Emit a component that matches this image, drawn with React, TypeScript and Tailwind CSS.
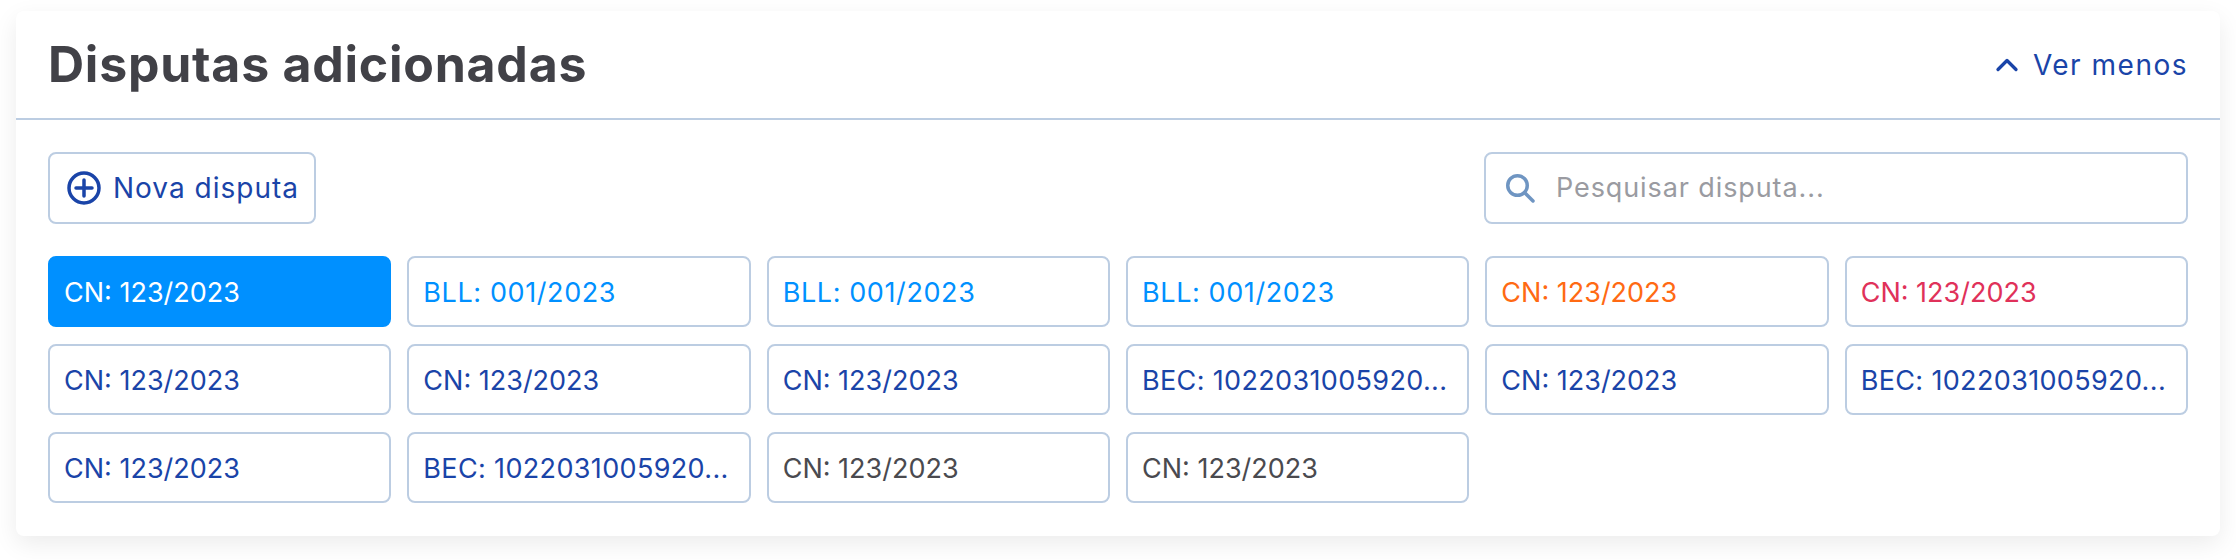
import { ChevronUp } from 'lucide-react'

type Chip = { label: string; color: string; active?: boolean }

const chips: Chip[] = [
  { label: 'CN: 123/2023', color: 'text-white', active: true },
  { label: 'BLL: 001/2023', color: 'text-[#0090ff] tracking-[0.6px]' },
  { label: 'BLL: 001/2023', color: 'text-[#0090ff] tracking-[0.6px]' },
  { label: 'BLL: 001/2023', color: 'text-[#0090ff] tracking-[0.6px]' },
  { label: 'CN: 123/2023', color: 'text-[#ff6a13]' },
  { label: 'CN: 123/2023', color: 'text-[#e0315a]' },
  { label: 'CN: 123/2023', color: 'text-[#1a44a8]' },
  { label: 'CN: 123/2023', color: 'text-[#1a44a8]' },
  { label: 'CN: 123/2023', color: 'text-[#1a44a8]' },
  { label: 'BEC: 1022031005920...', color: 'text-[#1a44a8] tracking-[0.35px]' },
  { label: 'CN: 123/2023', color: 'text-[#1a44a8]' },
  { label: 'BEC: 1022031005920...', color: 'text-[#1a44a8] tracking-[0.35px]' },
  { label: 'CN: 123/2023', color: 'text-[#1a44a8]' },
  { label: 'BEC: 1022031005920...', color: 'text-[#1a44a8] tracking-[0.35px]' },
  { label: 'CN: 123/2023', color: 'text-[#4a4a4f]' },
  { label: 'CN: 123/2023', color: 'text-[#4a4a4f]' },
]

export default function App() {
  return (
    <div className="h-[560px] bg-white pt-[11px] px-4 font-['Inter',sans-serif]">
      <div className="w-[2204px] h-[525px] rounded-lg bg-white shadow-[0_8px_24px_rgba(0,0,0,0.08)]">
        <div className="flex justify-between items-center h-[109px] pl-8 pr-8 border-b-2 border-[#bccde2]">
          <h1 className="text-[50px] font-bold text-[#414147] tracking-[0.75px]">Disputas adicionadas</h1>
          <button className="flex items-center gap-2 text-[28px] text-[#1a44a8] tracking-[1.5px]">
            <ChevronUp className="w-9 h-9" strokeWidth={2.2} />
            Ver menos
          </button>
        </div>
        <div className="px-8 pt-[32px]">
          <div className="flex justify-between">
            <button className="flex items-center gap-3 h-[72px] w-[268px] pl-[17px] rounded-lg border-2 border-[#bccde2] text-[28px] text-[#1a44a8] tracking-[1px]">
              <svg viewBox="0 0 34 34" className="w-[34px] h-[34px]" fill="none" stroke="currentColor" strokeWidth="3.5">
                <circle cx="17" cy="17" r="15" />
                <path d="M17 9v16M9 17h16" strokeLinecap="round" />
              </svg>
              Nova disputa
            </button>
            <div className="flex items-center gap-[21px] h-[72px] w-[704px] pl-5 rounded-lg border-2 border-[#bccde2] text-[27px] text-[#9a9ba1] tracking-[0.9px]">
              <svg viewBox="0 0 29 29" className="w-[29px] h-[29px]" fill="none" stroke="#6f95c2" strokeWidth="3.5" strokeLinecap="round">
                <circle cx="11.5" cy="11.5" r="9.75" />
                <path d="M18.5 18.5l8.5 8.5" />
              </svg>
              Pesquisar disputa...
            </div>
          </div>
          <div className="grid grid-cols-6 gap-x-4 gap-y-[17px] mt-[32px]">
            {chips.map((chip, i) => (
              <div
                key={i}
                className={`flex items-center h-[71px] px-[14px] pt-1 rounded-lg border-2 text-[27px] whitespace-nowrap overflow-hidden ${chip.color} ${
                  chip.active ? 'bg-[#0090ff] border-[#0090ff]' : 'border-[#bccde2]'
                }`}
              >
                {chip.label}
              </div>
            ))}
          </div>
        </div>
      </div>
    </div>
  )
}
